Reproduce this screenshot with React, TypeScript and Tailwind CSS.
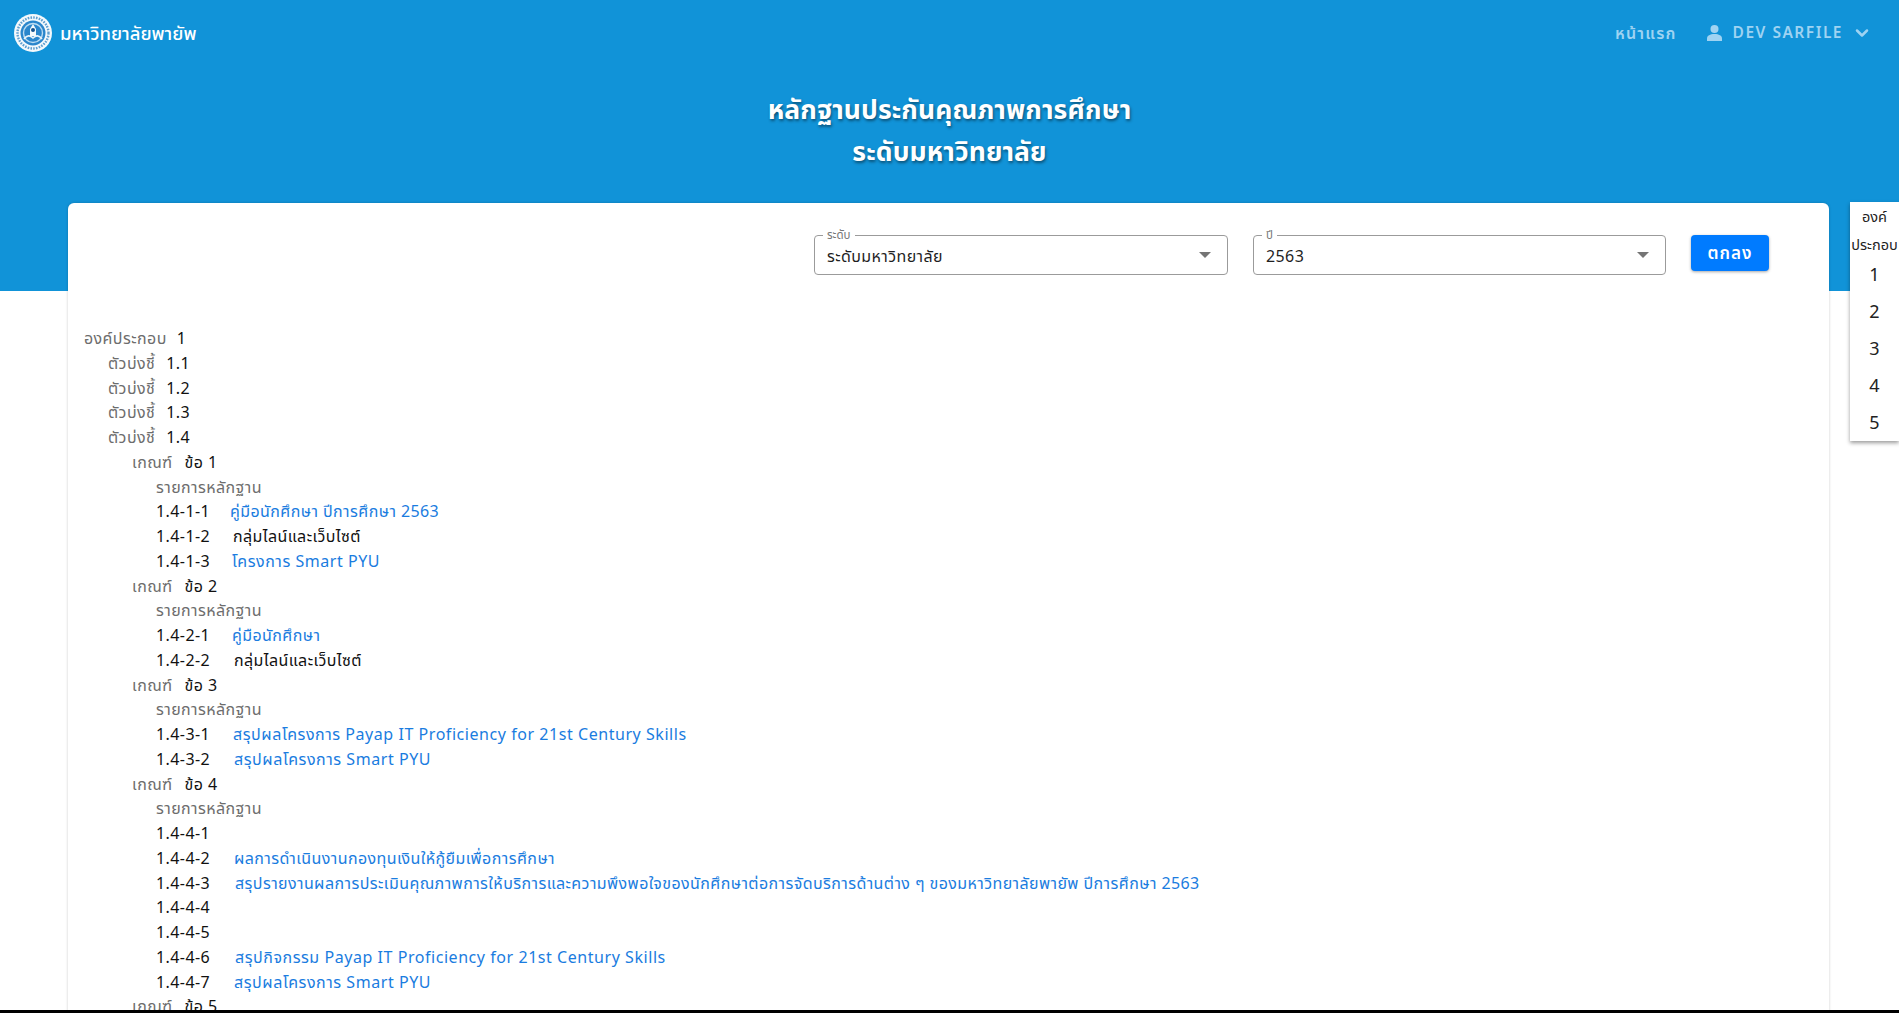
import { ChevronDown } from "lucide-react";

const FONT = "font-['Noto_Sans','Noto_Sans_Thai','DejaVu_Sans',sans-serif]";

type Row =
  | { t: "l"; indent: number; label: string; value: string }
  | { t: "h"; label: string }
  | { t: "i"; code: string; text?: string; link?: boolean; latin?: boolean; col: string };

const rows: Row[] = [
  { t: "l", indent: 0, label: "องค์ประกอบ", value: "1" },
  { t: "l", indent: 1, label: "ตัวบ่งชี้", value: "1.1" },
  { t: "l", indent: 1, label: "ตัวบ่งชี้", value: "1.2" },
  { t: "l", indent: 1, label: "ตัวบ่งชี้", value: "1.3" },
  { t: "l", indent: 1, label: "ตัวบ่งชี้", value: "1.4" },
  { t: "l", indent: 2, label: "เกณฑ์", value: "ข้อ 1" },
  { t: "h", label: "รายการหลักฐาน" },
  { t: "i", code: "1.4-1-1", text: "คู่มือนักศึกษา ปีการศึกษา 2563", link: true, col: "w-[74px]" },
  { t: "i", code: "1.4-1-2", text: "กลุ่มไลน์และเว็บไซต์", col: "w-[77px]" },
  { t: "i", code: "1.4-1-3", text: "โครงการ Smart PYU", link: true, latin: true, col: "w-[76px]" },
  { t: "l", indent: 2, label: "เกณฑ์", value: "ข้อ 2" },
  { t: "h", label: "รายการหลักฐาน" },
  { t: "i", code: "1.4-2-1", text: "คู่มือนักศึกษา", link: true, col: "w-[76px]" },
  { t: "i", code: "1.4-2-2", text: "กลุ่มไลน์และเว็บไซต์", col: "w-[78px]" },
  { t: "l", indent: 2, label: "เกณฑ์", value: "ข้อ 3" },
  { t: "h", label: "รายการหลักฐาน" },
  { t: "i", code: "1.4-3-1", text: "สรุปผลโครงการ Payap IT Proficiency for 21st Century Skills", link: true, latin: true, col: "w-[77px]" },
  { t: "i", code: "1.4-3-2", text: "สรุปผลโครงการ Smart PYU", link: true, latin: true, col: "w-[78px]" },
  { t: "l", indent: 2, label: "เกณฑ์", value: "ข้อ 4" },
  { t: "h", label: "รายการหลักฐาน" },
  { t: "i", code: "1.4-4-1", col: "w-[78px]" },
  { t: "i", code: "1.4-4-2", text: "ผลการดำเนินงานกองทุนเงินให้กู้ยืมเพื่อการศึกษา", link: true, col: "w-[78px]" },
  { t: "i", code: "1.4-4-3", text: "สรุปรายงานผลการประเมินคุณภาพการให้บริการและความพึงพอใจของนักศึกษาต่อการจัดบริการด้านต่าง ๆ ของมหาวิทยาลัยพายัพ ปีการศึกษา 2563", link: true, col: "w-[79px]" },
  { t: "i", code: "1.4-4-4", col: "w-[78px]" },
  { t: "i", code: "1.4-4-5", col: "w-[78px]" },
  { t: "i", code: "1.4-4-6", text: "สรุปกิจกรรม Payap IT Proficiency for 21st Century Skills", link: true, latin: true, col: "w-[79px]" },
  { t: "i", code: "1.4-4-7", text: "สรุปผลโครงการ Smart PYU", link: true, latin: true, col: "w-[78px]" },
  { t: "l", indent: 2, label: "เกณฑ์", value: "ข้อ 5" },
];

function Logo() {
  return (
    <svg width="38" height="38" viewBox="0 0 38 38" className="shrink-0">
      <circle cx="19" cy="19" r="19" fill="#f4f9fc" />
      <circle cx="19" cy="19" r="15.5" fill="none" stroke="#5f9fd0" strokeWidth="2.4" strokeDasharray="1.6 1.2" />
      <circle cx="19" cy="19" r="12.5" fill="#2a86cc" />
      <circle cx="19" cy="19" r="9.5" fill="none" stroke="#bcdcf2" strokeWidth="1.4" />
      <path d="M10 25c3-4 6-4 9-1 3-3 6-3 9 1" fill="none" stroke="#e8f3fa" strokeWidth="1.6" />
      <path d="M19 10l3 5v7h-6v-7z" fill="#f4f9fc" />
      <circle cx="19" cy="16" r="2" fill="#14508c" />
    </svg>
  );
}

function Field({ label, value, w }: { label: string; value: string; w: string }) {
  return (
    <div className={`relative h-[40px] ${w} rounded border border-[#9b9b9b] bg-white flex items-center justify-between pl-[12px] pr-[16px]`}>
      <span className="absolute -top-[8px] left-[8px] bg-white px-[4px] text-[11.5px] leading-[14px] text-[#777777]">{label}</span>
      <span className="text-[16px] tracking-[0.4px] text-[#1f1f1f] mt-[1px]">{value}</span>
      <span className="w-0 h-0 border-x-[6px] border-x-transparent border-t-[6.5px] border-t-[#757575]" />
    </div>
  );
}

export default function App() {
  return (
    <div className={`relative h-[1013px] overflow-hidden bg-white ${FONT}`}>
      <header className="h-[291px] bg-[#1193d8]">
        <nav className="h-[65px] flex items-center justify-between pl-[14px] pr-[27px]">
          <div className="flex items-center gap-[8px]">
            <Logo />
            <span className="text-[18.5px] font-medium text-white">มหาวิทยาลัยพายัพ</span>
          </div>
          <div className="flex items-center text-[#9fd3f2] font-semibold text-[15.5px]">
            <span className="mr-[30px] text-[16px] tracking-[1.2px]">หน้าแรก</span>
            <svg width="15" height="16" viewBox="0 0 15 16" className="mr-[11px]" fill="currentColor">
              <circle cx="7.5" cy="4" r="4" />
              <path d="M0 16v-2.5C0 10.5 3 9 7.5 9s7.5 1.5 7.5 4.5V16z" />
            </svg>
            <span className="tracking-[1.5px]">DEV SARFILE</span>
            <ChevronDown size={20} strokeWidth={3} className="ml-[9px]" />
          </div>
        </nav>
        <h1 className="mt-[23px] text-center text-[26.5px] leading-[42px] tracking-[0.1px] font-bold text-white [text-shadow:1px_2px_3px_rgba(0,0,0,0.45)]">
          หลักฐานประกันคุณภาพการศึกษา
          <br />
          ระดับมหาวิทยาลัย
        </h1>
      </header>

      <main className="relative -mt-[88px] mx-[68px] w-[1761px] h-[900px] bg-white rounded-t-md shadow-[0_0_3px_rgba(0,0,0,0.2)]">
        <div className="flex justify-end items-start pt-[32px] pr-[60px]">
          <Field label="ระดับ" value="ระดับมหาวิทยาลัย" w="w-[414px]" />
          <div className="w-[25px]" />
          <Field label="ปี" value="2563" w="w-[413px]" />
          <button className="ml-[25px] w-[78px] h-[36px] rounded bg-[#007bff] text-white text-[17px] font-semibold tracking-[1px] shadow-[0_1px_3px_rgba(0,0,0,0.35)]">
            ตกลง
          </button>
        </div>

        <div className="mt-[51px] pl-[16px] text-[16px] leading-[24.75px] tracking-[0.42px]">
          {rows.map((r, i) => {
            if (r.t === "l") {
              return (
                <div key={i} className={r.indent === 0 ? "" : r.indent === 1 ? "pl-[24px]" : "pl-[48px]"}>
                  <span className={`text-[#6d6d6d] ${r.indent === 2 ? "mr-[12px]" : r.indent === 1 ? "mr-[11px]" : "mr-[10px]"}`}>{r.label}</span>
                  <span className="text-[#111111]">{r.value}</span>
                </div>
              );
            }
            if (r.t === "h") {
              return <div key={i} className="pl-[72px] text-[#6d6d6d]">{r.label}</div>;
            }
            return (
              <div key={i} className="pl-[72px] flex">
                <span className={`text-[#111111] shrink-0 ${r.col}`}>{r.code}</span>
                {r.text && (
                  <span className={`${r.link ? "text-[#1a7ce0]" : "text-[#111111]"} ${r.latin ? "tracking-[0.55px]" : ""}`}>{r.text}</span>
                )}
              </div>
            );
          })}
        </div>
      </main>

      <aside className="absolute top-[202px] right-0 w-[49px] h-[239px] bg-white shadow-[0_2px_4px_rgba(0,0,0,0.4)] text-center text-[#222222]">
        <div className="text-[14.5px] leading-[28px] whitespace-nowrap">
          องค์
          <br />
          ประกอบ
        </div>
        <div className="-mt-[2px]">
          {["1", "2", "3", "4", "5"].map((n) => (
            <div key={n} className="h-[37px] leading-[37px] text-[18px]">{n}</div>
          ))}
        </div>
      </aside>

      <div className="absolute bottom-0 left-0 right-0 h-[3px] bg-black" />
    </div>
  );
}
